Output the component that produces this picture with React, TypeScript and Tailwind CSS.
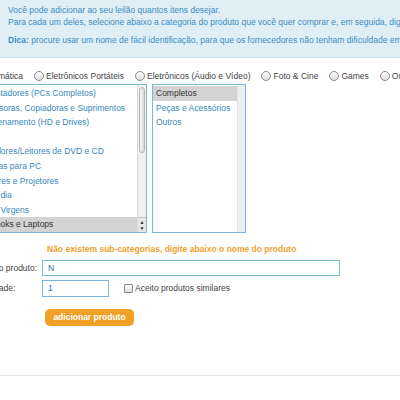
import React from "react";

const leftItems = [
  "Computadores (PCs Completos)",
  "Impressoras, Copiadoras e Suprimentos",
  "Armazenamento (HD e Drives)",
  "Cabos",
  "Gravadores/Leitores de DVD e CD",
  "Câmeras para PC",
  "Monitores e Projetores",
  "Multimídia",
  "Mídias Virgens",
  "Notebooks e Laptops",
];

const rightItems = ["Completos", "Peças e Acessórios", "Outros"];

const radios = [
  "Informática",
  "Eletrônicos Portáteis",
  "Eletrônicos (Áudio e Vídeo)",
  "Foto & Cine",
  "Games",
  "Outros",
];

function Radio() {
  return (
    <span className="inline-block w-[10px] h-[10px] rounded-full border border-[#8a8a8a] bg-gradient-to-b from-[#ffffff] to-[#dcdcdc] shrink-0" />
  );
}

export default function App() {
  return (
    <div className="w-[400px] h-[400px] overflow-hidden bg-white font-['Liberation_Sans',Arial,sans-serif] text-[8.5px] relative">
      <div className="h-[58px] bg-[#e0eef6] border-b border-[#cde2ee] pl-[8px] pt-[3px] text-[#3b8dc3] whitespace-nowrap">
        <p className="leading-[12px] pt-[1px]">Você pode adicionar ao seu leilão quantos itens desejar.</p>
        <p className="leading-[12px]">
          Para cada um deles, selecione abaixo a categoria do produto que você quer comprar e, em seguida, digite o nome do produto.
        </p>
        <p className="leading-[12px] mt-[6px]">
          <b>Dica:</b> procure usar um nome de fácil identificação, para que os fornecedores não tenham dificuldade em encontrá-lo.
        </p>
      </div>

      <div className="ml-[-31px] w-[460px]">
        <div className="mt-[12px] h-[12px] flex items-center gap-[11px] whitespace-nowrap text-[#444]">
          {radios.map((r) => (
            <span key={r} className="flex items-center gap-[2px]">
              <Radio />
              <span>{r}</span>
            </span>
          ))}
        </div>

        <div className="mt-[2px] flex gap-[5px]">
          <div className="w-[178px] h-[149px] border border-[#7ab6da] flex overflow-hidden bg-white">
            <div className="flex-1 pt-[1px] text-[#3688c0] whitespace-nowrap overflow-hidden">
              {leftItems.map((it, i) => (
                <div
                  key={it}
                  className={
                    i === leftItems.length - 1
                      ? "h-[14.6px] leading-[14.6px] pl-[3px] bg-[#d3d3d3] text-[#333]"
                      : "h-[14.6px] leading-[14.6px] pl-[3px]"
                  }
                >
                  {it}
                </div>
              ))}
            </div>
            <div className="w-[9px] bg-[#f1f1f1] border-l border-[#d8d8d8] flex flex-col">
              <div className="mt-[2px] mx-[1px] h-[66px] rounded-[4px] border border-[#b5b5b5] bg-gradient-to-r from-[#f8f8f8] to-[#d6d6d6]" />
              <div className="flex-1" />
              <div className="h-[15px] flex flex-col items-center justify-center text-[5px] leading-[6px] text-[#333] bg-[#e6e6e6] border-t border-[#c8c8c8]">
                <span>▲</span>
                <span>▼</span>
              </div>
            </div>
          </div>

          <div className="w-[94px] h-[149px] border border-[#7ab6da] flex overflow-hidden bg-white">
            <div className="flex-1 pt-[1px] text-[#3688c0] whitespace-nowrap overflow-hidden">
              {rightItems.map((it, i) => (
                <div
                  key={it}
                  className={
                    i === 0
                      ? "h-[14.6px] leading-[14.6px] pl-[3px] bg-[#d3d3d3] text-[#333]"
                      : "h-[14.6px] leading-[14.6px] pl-[3px]"
                  }
                >
                  {it}
                </div>
              ))}
            </div>
            <div className="w-[8px] bg-[#eeeeee] border-l border-[#e2e2e2]" />
          </div>
        </div>

        <div className="mt-[10px] h-[12px] leading-[12px] pl-[78px] font-bold text-[#f0a12c] whitespace-nowrap">
          Não existem sub-categorias, digite abaixo o nome do produto
        </div>

        <div className="mt-[5px] flex items-center text-[#444]">
          <span className="w-[73px] whitespace-nowrap">Nome do produto:</span>
          <div className="w-[298px] h-[16px] border border-[#7ab6da] flex items-center pl-[5px] text-[#2c6e9e]">
            N
          </div>
        </div>

        <div className="mt-[4px] flex items-center text-[#444]">
          <span className="w-[73px] whitespace-nowrap">Quantidade:</span>
          <div className="w-[67px] h-[17px] border border-[#7ab6da] flex items-center pl-[5px] text-[#2c6e9e]">
            1
          </div>
          <span className="ml-[15px] w-[9px] h-[9px] border border-[#8a8a8a] rounded-[1px] bg-gradient-to-b from-[#ffffff] to-[#dedede]" />
          <span className="ml-[2px] whitespace-nowrap">Aceito produtos similares</span>
        </div>

        <div className="mt-[12px] pl-[76px]">
          <div className="w-[89px] h-[17px] rounded-[5px] bg-[#f0a024] text-white font-bold flex items-center justify-center whitespace-nowrap">
            adicionar produto
          </div>
        </div>
      </div>

      <div className="mt-[49px] border-t border-[#e4e4e4]" />
    </div>
  );
}
